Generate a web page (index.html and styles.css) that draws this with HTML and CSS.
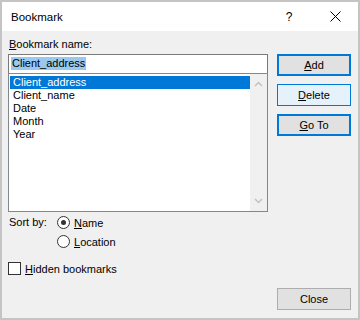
FILE: index.html
```html
<!DOCTYPE html>
<html lang="en">
<head>
  <meta charset="UTF-8">
  <title>Bookmark</title>
  <link rel="stylesheet" href="styles.css">
</head>
<body>

  <div class="dialog">
    <div class="titlebar">
      <span class="title">Bookmark</span>
      <span class="cap-btn">?</span>
      <span class="cap-btn">
        <svg width="11" height="11" viewBox="0 0 11 11"><path d="M0.5 0.5L10.5 10.5M10.5 0.5L0.5 10.5" stroke="#000" stroke-width="1" fill="none"/></svg>
      </span>
    </div>

    <div class="content">
      <div class="left">
        <div class="field-label"><u>B</u>ookmark name:</div>
        <div class="textbox"><span class="sel">Client_address</span></div>

        <div class="listbox">
          <ul class="items">
            <li class="selected">Client_address</li>
            <li>Client_name</li>
            <li>Date</li>
            <li>Month</li>
            <li>Year</li>
          </ul>
          <div class="scrollbar">
            <span class="arrow">
              <svg width="9" height="6" viewBox="0 0 9 6"><path d="M1 5L4.5 1.5L8 5" stroke="#c2c2c2" stroke-width="1.5" fill="none"/></svg>
            </span>
            <span class="arrow">
              <svg width="9" height="6" viewBox="0 0 9 6"><path d="M1 1L4.5 4.5L8 1" stroke="#c2c2c2" stroke-width="1.5" fill="none"/></svg>
            </span>
          </div>
        </div>

        <div class="sort">
          <span class="sort-label">Sort by:</span>
          <div class="options">
            <div class="option"><span class="radio checked"></span><span><u>N</u>ame</span></div>
            <div class="option"><span class="radio"></span><span><u>L</u>ocation</span></div>
          </div>
        </div>

        <div class="check-row"><span class="checkbox"></span><span><u>H</u>idden bookmarks</span></div>
      </div>

      <div class="right">
        <button class="btn focused"><u>A</u>dd</button>
        <button class="btn hover"><u>D</u>elete</button>
        <button class="btn focused"><u>G</u>o To</button>
        <button class="btn plain close">Close</button>
      </div>
    </div>
  </div>

</body>
</html>
```

FILE: styles.css
```css
body {
  margin: 0;
  font-family: 'Liberation Sans', 'Arial', sans-serif;
  font-size: 11px;
  color: #000;
  background-color: #fff;
}

.dialog {
  width: 360px;
  height: 320px;
  box-sizing: border-box;
  border: 2px solid #c4c4c4;
  display: flex;
  flex-direction: column;
  background-color: #f0f0f0;
}

.titlebar {
  height: 29px;
  background-color: #fff;
  display: flex;
  align-items: center;
}

.title {
  flex: 1;
  padding-left: 9px;
  font-size: 11.5px;
}

.cap-btn {
  width: 46px;
  height: 29px;
  display: flex;
  align-items: center;
  justify-content: center;
  font-size: 12px;
}

.content {
  flex: 1;
  display: flex;
  gap: 9px;
  padding: 5px 7px 8px 6px;
}

.left {
  width: 260px;
  display: flex;
  flex-direction: column;
}

.field-label {
  height: 16px;
  line-height: 16px;
  margin-bottom: 2px;
  padding-left: 1px;
}

.textbox {
  height: 19px;
  box-sizing: border-box;
  border: 1px solid #7a7a7a;
  border-bottom: none;
  background-color: #fff;
  padding: 2px 0 0 2px;
}

.sel {
  display: inline-block;
  height: 13px;
  line-height: 13px;
  padding: 0 1px;
  background-color: #99c9ef;
}

.listbox {
  height: 139px;
  box-sizing: border-box;
  border: 1px solid #828790;
  background-color: #fff;
  display: flex;
}

.items {
  flex: 1;
  list-style: none;
  margin: 0;
  padding: 2px 0 0 1px;
}

.items li {
  height: 13px;
  line-height: 13px;
  padding-left: 3px;
}

.items li.selected {
  background-color: #0078d7;
  color: #fff;
}

.scrollbar {
  width: 17px;
  background-color: #f0f0f0;
  display: flex;
  flex-direction: column;
  justify-content: space-between;
}

.arrow {
  height: 20px;
  display: flex;
  align-items: center;
  justify-content: center;
}

.sort {
  display: flex;
  margin-top: 1px;
}

.sort-label {
  width: 48px;
  height: 19px;
  line-height: 19px;
  padding-left: 1px;
}

.option,
.check-row {
  height: 19px;
  display: flex;
  align-items: center;
  gap: 4px;
}

.radio {
  width: 13px;
  height: 13px;
  box-sizing: border-box;
  border: 1px solid #333;
  border-radius: 50%;
  background-color: #fff;
  display: flex;
  align-items: center;
  justify-content: center;
}

.radio.checked::after {
  content: '';
  width: 5px;
  height: 5px;
  border-radius: 50%;
  background-color: #333;
}

.check-row {
  margin-top: 8px;
}

.checkbox {
  width: 13px;
  height: 13px;
  box-sizing: border-box;
  border: 1px solid #333;
  background-color: #fff;
}

.right {
  width: 74px;
  display: flex;
  flex-direction: column;
  padding-top: 18px;
  gap: 8px;
}

.btn {
  height: 22px;
  box-sizing: border-box;
  margin: 0;
  padding: 0;
  font-family: inherit;
  font-size: 11px;
  color: #000;
  background-color: #e1e1e1;
  border: 1px solid #adadad;
}

.btn.focused {
  border: 2px solid #0078d7;
}

.btn.hover {
  border: 1px solid #0078d7;
  background-color: #e5f1fb;
}

.btn.close {
  margin-top: auto;
}
```
